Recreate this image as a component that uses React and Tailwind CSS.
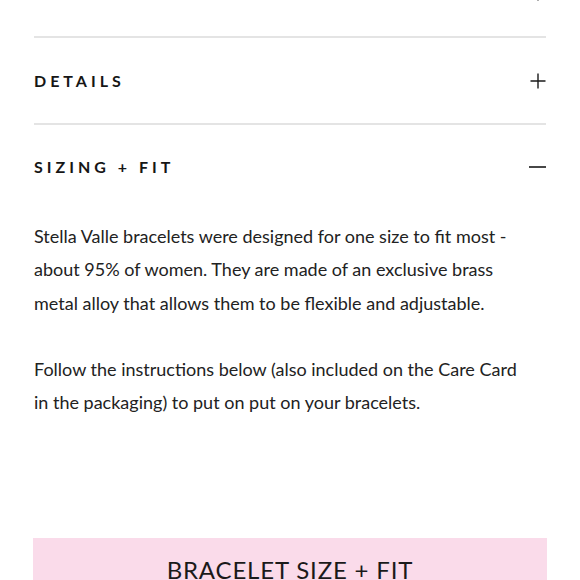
import React from "react";

const font = { fontFamily: "Lato, 'Open Sans', sans-serif" };

function Plus() {
  return (
    <svg width="16" height="16" viewBox="0 0 16 16" className="shrink-0">
      <path d="M8 0.5v15M0.5 8h15" stroke="#1a1a1a" strokeWidth="1.4" fill="none" />
    </svg>
  );
}

function Minus() {
  return (
    <svg width="17" height="4" viewBox="0 0 17 4" className="shrink-0">
      <path d="M0 2h17" stroke="#1a1a1a" strokeWidth="1.6" fill="none" />
    </svg>
  );
}

function Header({ title, open, className = "h-[86px]" }) {
  return (
    <div className={`flex items-center justify-between ${className}`}>
      <span className="text-[16px] font-bold tracking-[0.25em] text-[#161616] leading-none">{title}</span>
      {open ? <Minus /> : <Plus />}
    </div>
  );
}

export default function App() {
  return (
    <div className="w-[580px] h-[580px] overflow-hidden bg-white" style={font}>
      <div className="px-[34px]">
        {/* previous item, scrolled mostly out of view */}
        <div className="-mt-[50px] border-b-2 border-[#e4e4e4]">
          <Header title="DESCRIPTION" />
        </div>
        <div className="border-b-2 border-[#e4e4e4]">
          <Header title="DETAILS" className="h-[85px]" />
        </div>
        <div>
          <Header title="SIZING + FIT" open className="h-[83px]" />
          <div className="pt-[12px] text-[18px] leading-[33.3px] text-[#222]">
            <p>
              Stella Valle bracelets were designed for one size to fit most -<br />
              about 95% of women. They are made of an exclusive brass<br />
              metal alloy that allows them to be flexible and adjustable.
            </p>
            <p className="mt-[33.3px]">
              Follow the instructions below (also included on the Care Card<br />
              in the packaging) to put on put on your bracelets.
            </p>
          </div>
          <div className="mt-[118.5px] -mx-[1px] bg-[#fadbea] h-[80px] flex justify-center pt-[20px]">
            <span className="text-[24px] tracking-[0.035em] text-[#1a1a1a] leading-none">BRACELET SIZE + FIT</span>
          </div>
        </div>
      </div>
    </div>
  );
}
